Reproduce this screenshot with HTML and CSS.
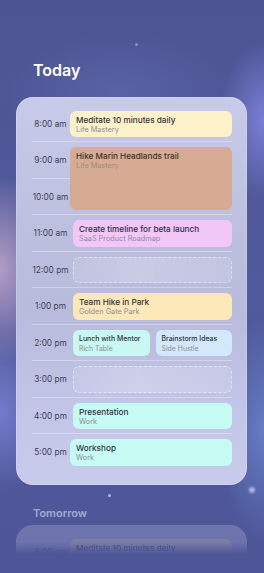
FILE: index.html
```html
<!DOCTYPE html>
<html lang="en">
<head>
<meta charset="utf-8">
<title>Today</title>
<link rel="stylesheet" href="styles.css">
</head>
<body>
<div class="screen">
  <span class="dot dot-a"></span>
  <span class="dot dot-b"></span>
  <span class="dot dot-c"></span>

  <h1 class="day-title">Today</h1>

  <section class="card">
    <div class="timeline">
      <div class="line r1"></div>
      <div class="line r2"></div>
      <div class="line r3"></div>
      <div class="line r4"></div>
      <div class="line r5"></div>
      <div class="line r6"></div>
      <div class="line r7"></div>
      <div class="line r8"></div>
      <div class="line r9"></div>

      <div class="time r1">8:00 am</div>
      <div class="time r2">9:00 am</div>
      <div class="time r3">10:00 am</div>
      <div class="time r4">11:00 am</div>
      <div class="time r5">12:00 pm</div>
      <div class="time r6">1:00 pm</div>
      <div class="time r7">2:00 pm</div>
      <div class="time r8">3:00 pm</div>
      <div class="time r9">4:00 pm</div>
      <div class="time r10">5:00 pm</div>

      <div class="event r1 wide cream">
        <div class="ev-title">Meditate 10 minutes daily</div>
        <div class="ev-sub">Life Mastery</div>
      </div>
      <div class="event span2 wide tan">
        <div class="ev-title">Hike Marin Headlands trail</div>
        <div class="ev-sub">Life Mastery</div>
      </div>
      <div class="event r4 pink">
        <div class="ev-title">Create timeline for beta launch</div>
        <div class="ev-sub">SaaS Product Roadmap</div>
      </div>
      <div class="slot r5"></div>
      <div class="event r6 amber">
        <div class="ev-title">Team Hike in Park</div>
        <div class="ev-sub">Golden Gate Park</div>
      </div>
      <div class="pair r7">
        <div class="event small mint">
          <div class="ev-title">Lunch with Mentor</div>
          <div class="ev-sub">Rich Table</div>
        </div>
        <div class="event small sky">
          <div class="ev-title">Brainstorm Ideas</div>
          <div class="ev-sub">Side Hustle</div>
        </div>
      </div>
      <div class="slot r8"></div>
      <div class="event r9 aqua">
        <div class="ev-title">Presentation</div>
        <div class="ev-sub">Work</div>
      </div>
      <div class="event r10 wide aqua">
        <div class="ev-title">Workshop</div>
        <div class="ev-sub">Work</div>
      </div>
    </div>
  </section>

  <h2 class="day-title tomorrow">Tomorrow</h2>

  <div class="preview">
    <section class="card">
      <div class="timeline">
        <div class="time r1">8:00 am</div>
        <div class="event r1 wide cream">
          <div class="ev-title">Meditate 10 minutes daily</div>
          <div class="ev-sub">Life Mastery</div>
        </div>
      </div>
    </section>
  </div>
</div>
</body>
</html>
```

FILE: styles.css
```css
* { box-sizing: border-box; }

html, body {
  margin: 0;
  padding: 0;
  height: 100%;
}

body {
  font-family: "Inter", "Noto Sans", "Liberation Sans", sans-serif;
  background: #4e5696;
  overflow: hidden;
}

.screen {
  position: relative;
  width: 264px;
  height: 573px;
  overflow: hidden;
  background:
    radial-gradient(ellipse 55px 95px at 0% 47%, rgba(196, 168, 206, 0.85), rgba(196, 168, 206, 0) 100%),
    radial-gradient(ellipse 50px 80px at 0% 72%, rgba(128, 136, 222, 0.75), rgba(128, 136, 222, 0) 100%),
    radial-gradient(ellipse 45px 80px at 100% 21%, rgba(130, 134, 224, 0.85), rgba(130, 134, 224, 0) 100%),
    radial-gradient(ellipse 45px 110px at 100% 75%, rgba(110, 140, 214, 0.7), rgba(110, 140, 214, 0) 100%),
    radial-gradient(ellipse 120px 60px at 45% 16%, rgba(100, 112, 180, 0.45), rgba(100, 112, 180, 0) 100%),
    linear-gradient(180deg, #4d5493 0%, #515a9c 50%, #4e5698 100%);
}

.dot {
  position: absolute;
  border-radius: 50%;
  background: rgba(255, 255, 255, 0.5);
}
.dot-a { left: 135px; top: 43px; width: 3px; height: 3px; background: rgba(200, 205, 255, 0.45); }
.dot-b { left: 108px; top: 494px; width: 3px; height: 3px; background: rgba(220, 225, 255, 0.7); }
.dot-c { left: 249px; top: 487px; width: 6px; height: 6px; background: rgba(220, 225, 255, 0.65); filter: blur(0.8px); }

.day-title {
  margin: 60px 0 0 33px;
  font-size: 16px;
  line-height: 20px;
  font-weight: 600;
  color: #ffffff;
}

.day-title.tomorrow {
  margin-top: 21px;
  font-size: 11px;
  line-height: 14px;
  color: rgba(235, 238, 255, 0.55);
}

.card {
  margin: 17px 17px 0 16px;
  width: 231px;
  padding: 8.5px 15px 14.5px 16px;
  border-radius: 17px;
  background: linear-gradient(180deg, #c8cae9 0%, #bdbfdf 35%, #b9bbdc 55%, #c3c5e8 80%, #c9cbec 100%);
  box-shadow: inset 0 0 0 1px rgba(255, 255, 255, 0.18);
}

.timeline {
  display: grid;
  grid-template-columns: 37px 1fr;
  grid-template-rows: repeat(10, 36.5px);
  column-gap: 4px;
}

.r1 { grid-row: 1; }
.r2 { grid-row: 2; }
.r3 { grid-row: 3; }
.r4 { grid-row: 4; }
.r5 { grid-row: 5; }
.r6 { grid-row: 6; }
.r7 { grid-row: 7; }
.r8 { grid-row: 8; }
.r9 { grid-row: 9; }
.r10 { grid-row: 10; }
.span2 { grid-row: 2 / span 2; }

.line {
  grid-column: 1 / -1;
  align-self: end;
  height: 1px;
  background: rgba(255, 255, 255, 0.32);
}

.time {
  grid-column: 1;
  align-self: center;
  text-align: center;
  white-space: nowrap;
  font-size: 8.3px;
  line-height: 10px;
  color: #3e4158;
}

.event, .slot, .pair {
  grid-column: 2;
  margin: 5px 0;
  border-radius: 6px;
}

.event {
  padding: 4px 6px 0 6px;
  overflow: hidden;
}

.wide { margin-left: -3px; }

.ev-title {
  font-size: 8.2px;
  line-height: 10px;
  font-weight: 500;
  color: #30313f;
  white-space: nowrap;
}

.ev-sub {
  font-size: 7.3px;
  line-height: 10px;
  color: #8e8e98;
  white-space: nowrap;
}

.small .ev-title { font-size: 6.9px; }
.small .ev-sub { font-size: 6.9px; }

.pair {
  display: flex;
  gap: 6px;
  border-radius: 0;
}
.pair .event {
  flex: 1;
  margin: 0;
}

.slot {
  border: 1px dashed rgba(255, 255, 255, 0.45);
  background: linear-gradient(90deg, rgba(255, 255, 255, 0.1), rgba(255, 255, 255, 0.22) 40%, rgba(255, 255, 255, 0.12));
}

.cream { background: #fdf1c9; }
.tan { background: rgba(218, 166, 134, 0.85); }
.tan .ev-title { color: #3d302c; }
.tan .ev-sub { color: #a38d84; }
.pink { background: #f0c7f6; }
.pink .ev-sub { color: #9a8aa6; }
.amber { background: #fde8b9; }
.mint { background: #c8f8f1; }
.sky { background: #d3e9fb; }
.aqua { background: #c6fbf3; }

.preview {
  height: 43px;
  overflow: hidden;
  opacity: 0.26;
  -webkit-mask-image: linear-gradient(180deg, #000 50%, transparent 80%);
  mask-image: linear-gradient(180deg, #000 50%, transparent 80%);
}

.preview .card {
  margin-top: 5px;
}
```
